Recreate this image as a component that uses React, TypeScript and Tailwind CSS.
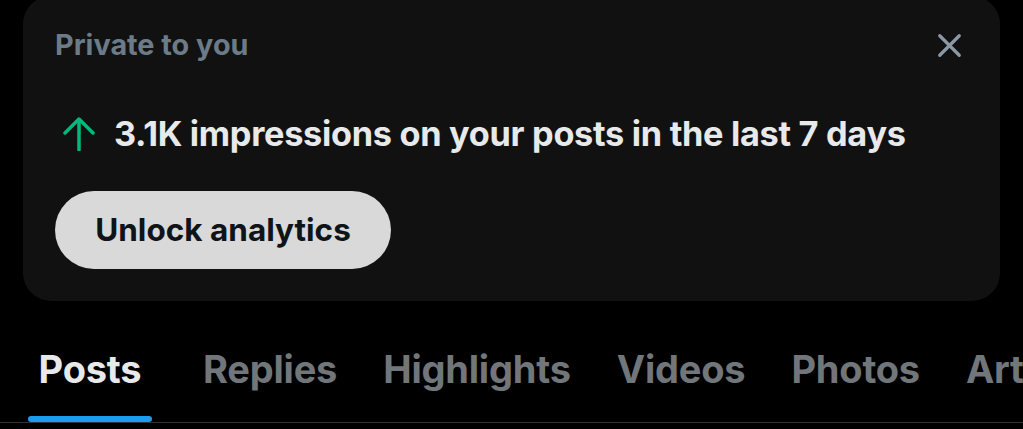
import { X } from "lucide-react";

const tabs = ["Replies", "Highlights", "Videos", "Photos", "Articles"];

function ArrowUp() {
  return (
    <svg width="32" height="34" viewBox="0 0 32 34" fill="none" stroke="#00ba7c" strokeWidth="3.5" strokeLinecap="round" strokeLinejoin="round">
      <path d="M2 16 16 2l14 14" />
      <path d="M16 3v30" />
    </svg>
  );
}

export default function App() {
  return (
    <div className="w-[1023px] h-[429px] overflow-hidden bg-black font-['Inter',sans-serif]">
      {/* Private analytics card */}
      <div className="-mt-1 mx-[23px] h-[305px] rounded-[28px] bg-[#111111] pl-8 pr-[31px] pt-[33px]">
        <div className="flex h-[32px] items-center justify-between">
          <p className="text-[28.8px] font-bold leading-[32px] text-[#6b7b88]">Private to you</p>
          <X size={39} strokeWidth={2} className="text-[#8b98a5]" />
        </div>

        <div className="mt-[53px] flex items-center gap-[19px] pl-2">
          <ArrowUp />
          <p className="text-[34.3px] font-bold leading-[40px] tracking-[-0.3px] text-[#e7e9ea]">
            3.1K impressions on your posts in the last 7 days
          </p>
        </div>

        <button className="mt-[37px] flex h-[78px] w-[336px] items-center justify-center rounded-full bg-[#d9d9d9]">
          <span className="text-[31.5px] font-bold text-[#0f1419]">Unlock analytics</span>
        </button>
      </div>

      {/* Profile tabs */}
      <div className="mt-[46px] border-b border-[#2f3336]">
        <div className="flex items-start pl-[28px] whitespace-nowrap">
          <div className="flex w-[124px] flex-col items-center">
            <span className="text-[38px] font-bold leading-[44px] tracking-[-0.2px] text-[#e7e9ea]">Posts</span>
            <div className="mt-[25px] h-[6px] w-[124px] rounded-full bg-[#1d9bf0]" />
          </div>
          <div className="ml-[51px] flex gap-[46px]">
            {tabs.map((t) => (
              <span key={t} className="text-[38px] font-bold leading-[44px] tracking-[-0.2px] text-[#71767b]">
                {t}
              </span>
            ))}
          </div>
        </div>
      </div>
    </div>
  );
}
